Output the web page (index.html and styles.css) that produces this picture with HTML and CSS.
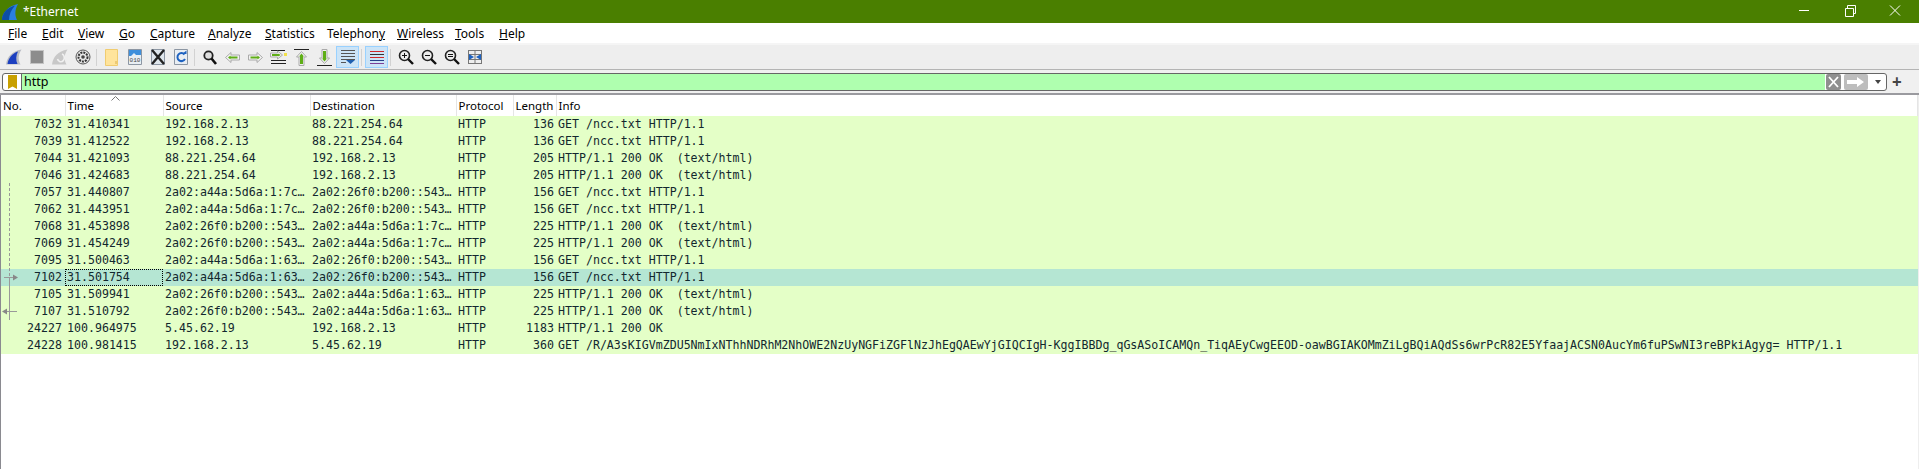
FILE: index.html
```html
<!DOCTYPE html>
<html lang="en">
<head>
  <meta charset="UTF-8">
  <title>*Ethernet</title>
  <link rel="stylesheet" href="styles.css">
</head>
<body>

<div class="titlebar">
  <svg class="app-icon" width="16" height="16" viewBox="0 0 16 16"><path d="M0 16C0 9 6 2 16 0C13 5 12.500 11 15 16Z" fill="#2a7fe0"/><path d="M0 16C0 9 5 4 13 1.500C9 6 7 11 7 16Z" fill="#0d4ea6"/></svg>
  <span class="title">*Ethernet</span>
  <div class="window-btns">
    <svg width="46" height="23" viewBox="0 0 46 23"><path d="M18 10.500H28" stroke="#fff"/></svg>
    <svg width="46" height="23" viewBox="0 0 46 23"><path d="M18.500 8.500H26.500V16.500H18.500ZM20.500 8.500V5.500H28.500V13.500H26.500" stroke="#fff" fill="none"/></svg>
    <svg width="46" height="23" viewBox="0 0 46 23"><path d="M17 5.500L27 15.500M27 5.500L17 15.500" stroke="#fff"/></svg>
  </div>
</div>

<div class="menubar">
  <span><u>F</u>ile</span>
  <span><u>E</u>dit</span>
  <span><u>V</u>iew</span>
  <span><u>G</u>o</span>
  <span><u>C</u>apture</span>
  <span><u>A</u>nalyze</span>
  <span><u>S</u>tatistics</span>
  <span>Telephon<u>y</u></span>
  <span><u>W</u>ireless</span>
  <span><u>T</u>ools</span>
  <span><u>H</u>elp</span>
</div>

<div class="toolbar">
  <div class="tool"><svg width="16" height="16" viewBox="0 0 16 16"><path d="M0 15.500C1 8 6 2 15.500 .500C12.500 5 11.500 10 14.500 15.500Z" fill="#b9bcc4"/><path d="M1.500 15C2.500 9 6 4.500 12 2.500C10 6.500 9.500 11 11.500 15Z" fill="#1c3fc0"/></svg></div>
  <div class="tool"><svg width="16" height="16" viewBox="0 0 16 16"><rect x="1.500" y="1.500" width="13" height="13" fill="#8c8c8c" stroke="#c4c4c4"/></svg></div>
  <div class="tool"><svg width="16" height="16" viewBox="0 0 16 16"><path d="M0 15.500C1 8 6 2 15.500 .500C12.500 5 11.500 10 14.500 15.500Z" fill="#c8c8c8"/><path d="M10 5A3.500 4 0 1 1 5.500 10" fill="none" stroke="#f0f0f0" stroke-width="1.600"/></svg></div>
  <div class="tool"><svg width="16" height="16" viewBox="0 0 16 16"><circle cx="8" cy="8" r="7" fill="#e8e8e8" stroke="#555"/><circle cx="8" cy="8" r="4.500" fill="none" stroke="#333" stroke-width="2" stroke-dasharray="2 1"/><circle cx="8" cy="8" r="1.800" fill="#444"/></svg></div>
  <div class="tool-sep"></div>
  <div class="tool"><svg width="14" height="17" viewBox="0 0 14 17"><path d="M.500.500H12.500V16.500H.500Z" fill="#ffe49c" stroke="#f0cc70"/><path d="M11 12V15" stroke="#d8b050"/></svg></div>
  <div class="tool"><svg width="14" height="16" viewBox="0 0 14 16"><path d="M.500.500H13.500V15.500H.500Z" fill="#e9eef3" stroke="#8c96a3"/><path d="M1 1H13V6H8L6 4L3 7H1Z" fill="#3f8fdc"/><text class="tiny" x="7" y="13" text-anchor="middle">010</text></svg></div>
  <div class="tool"><svg width="14" height="16" viewBox="0 0 14 16"><path d="M.500.500H13.500V15.500H.500Z" fill="#dfe6ec" stroke="#8c96a3"/><path d="M1 1L13 15M13 1L1 15" stroke="#222" stroke-width="2.400"/></svg></div>
  <div class="tool"><svg width="14" height="16" viewBox="0 0 14 16"><path d="M.500.500H13.500V15.500H.500Z" fill="#e9eef3" stroke="#8c96a3"/><path d="M10.500 5.500A4 4 0 1 0 11 10" fill="none" stroke="#1e62c0" stroke-width="2"/><path d="M8 5H12.500V1.500Z" fill="#1e62c0"/></svg></div>
  <div class="tool-sep"></div>
  <div class="tool"><svg width="14" height="15" viewBox="0 0 14 15"><circle cx="5.500" cy="5.500" r="4.200" fill="#ddd" stroke="#222" stroke-width="1.800"/><path d="M8.500 8.500L13 14" stroke="#111" stroke-width="2.600"/></svg></div>
  <div class="tool"><svg width="15" height="11" viewBox="0 0 15 11"><path d="M.500 5.500L6 .500V3H14.500V8H6V10.500Z" fill="#f2f2f2" stroke="#aaa"/><path d="M3 5.500L5.500 3.500V4.500H12.500V6.500H5.500V7.500Z" fill="#5fae17"/></svg></div>
  <div class="tool"><svg width="15" height="11" viewBox="0 0 15 11"><path d="M14.500 5.500L9 .500V3H.500V8H9V10.500Z" fill="#f2f2f2" stroke="#aaa"/><path d="M12 5.500L9.500 3.500V4.500H2.500V6.500H9.500V7.500Z" fill="#5fae17"/></svg></div>
  <div class="tool"><svg width="17" height="16" viewBox="0 0 17 16"><path d="M1 1.500H15M1 11.500H16M1 14.500H16" stroke="#222"/><path d="M12.500 6L7.500 2V4H.500V8H7.500V10Z" fill="#f2f2f2" stroke="#aaa"/><path d="M10.500 6L8.500 4.500V5H2V7H8.500V7.500Z" fill="#5fae17"/><rect x="14" y="4" width="3" height="3" fill="#f2e04a"/></svg></div>
  <div class="tool"><svg width="15" height="17" viewBox="0 0 15 17"><path d="M0 .500H15" stroke="#222"/><path d="M7.500 2.500L12.500 8H10V16.500H5V8H2.500Z" fill="#f2f2f2" stroke="#aaa"/><path d="M7.500 4.500L10 7.500H9V15H6V7.500H5Z" fill="#5fae17"/></svg></div>
  <div class="tool"><svg width="15" height="17" viewBox="0 0 15 17"><path d="M0 16.500H15" stroke="#222"/><path d="M7.500 14.500L12.500 9H10V.500H5V9H2.500Z" fill="#f2f2f2" stroke="#aaa"/><path d="M7.500 12.500L10 9.500H9V2H6V9.500H5Z" fill="#5fae17"/></svg></div>
  <div class="tool on"><svg width="16" height="16" viewBox="0 0 16 16"><path d="M1 1.500H15M1 4.500H15M1 7.500H15M1 10.500H15M1 13.500H6" stroke="#555"/><path d="M6 11H15L10.500 15Z" fill="#1e5fb0"/></svg></div>
  <div class="tool-sep"></div>
  <div class="tool on"><svg width="16" height="16" viewBox="0 0 16 16"><path d="M1 2.500H15" stroke="#d0282c"/><path d="M1 5.500H15" stroke="#333"/><path d="M1 8.500H15" stroke="#d0282c"/><path d="M1 11.500H15" stroke="#27408b"/><path d="M1 14.500H15" stroke="#7b3f98"/></svg></div>
  <div class="tool-sep"></div>
  <div class="tool"><svg width="16" height="16" viewBox="0 0 16 16"><circle cx="6.500" cy="6.500" r="5" fill="#eee" stroke="#222" stroke-width="1.600"/><path d="M4 6.500H9M6.500 4V9" stroke="#111"/><path d="M10 10L15 15" stroke="#111" stroke-width="2.400"/></svg></div>
  <div class="tool"><svg width="16" height="16" viewBox="0 0 16 16"><circle cx="6.500" cy="6.500" r="5" fill="#eee" stroke="#222" stroke-width="1.600"/><path d="M4 6.500H9" stroke="#111"/><path d="M10 10L15 15" stroke="#111" stroke-width="2.400"/></svg></div>
  <div class="tool"><svg width="16" height="16" viewBox="0 0 16 16"><circle cx="6.500" cy="6.500" r="5" fill="#eee" stroke="#222" stroke-width="1.600"/><path d="M4 5.500H9M4 7.500H9" stroke="#111"/><path d="M10 10L15 15" stroke="#111" stroke-width="2.400"/></svg></div>
  <div class="tool"><svg width="16" height="16" viewBox="0 0 16 16"><path d="M1 1.500H15M1 14.500H15M1.500 1V15M8 1V15M14.500 1V15M1 5.500H15M1 10.500H15" stroke="#777"/><path d="M2 5V11L7 8ZM14 5V11L9 8Z" fill="#1e62c0"/></svg></div>
</div>

<div class="filterbar">
  <div class="filter-box">
    <div class="bookmark"><svg width="9" height="14" viewBox="0 0 9 14"><path d="M0 0H9V14L4.500 11.500L0 14Z" fill="#c8a000"/></svg></div>
    <div class="filter-text">http</div>
    <div class="filter-clear"><svg width="15" height="14" viewBox="0 0 15 14"><path d="M3 2L12 12M12 2L3 12" stroke="#fff" stroke-width="1.800"/></svg></div>
    <div class="filter-apply"><svg width="18" height="10" viewBox="0 0 18 10"><path d="M0 3H10V0L17 5L10 10V7H0Z" fill="#fff"/></svg></div>
    <div class="filter-drop"></div>
  </div>
  <div class="filter-add">+</div>
</div>

<div class="packet-list">
  <table>
    <colgroup>
      <col class="c-no"><col class="c-time"><col class="c-src"><col class="c-dst"><col class="c-proto"><col class="c-len"><col>
    </colgroup>
    <thead>
      <tr><th>No.</th><th>Time</th><th>Source</th><th>Destination</th><th>Protocol</th><th>Length</th><th>Info</th></tr>
    </thead>
    <tbody>
      <tr><td>7032</td><td>31.410341</td><td>192.168.2.13</td><td>88.221.254.64</td><td>HTTP</td><td>136</td><td>GET /ncc.txt HTTP/1.1</td></tr>
      <tr><td>7039</td><td>31.412522</td><td>192.168.2.13</td><td>88.221.254.64</td><td>HTTP</td><td>136</td><td>GET /ncc.txt HTTP/1.1</td></tr>
      <tr><td>7044</td><td>31.421093</td><td>88.221.254.64</td><td>192.168.2.13</td><td>HTTP</td><td>205</td><td>HTTP/1.1 200 OK  (text/html)</td></tr>
      <tr><td>7046</td><td>31.424683</td><td>88.221.254.64</td><td>192.168.2.13</td><td>HTTP</td><td>205</td><td>HTTP/1.1 200 OK  (text/html)</td></tr>
      <tr><td>7057</td><td>31.440807</td><td>2a02:a44a:5d6a:1:7c…</td><td>2a02:26f0:b200::543…</td><td>HTTP</td><td>156</td><td>GET /ncc.txt HTTP/1.1</td></tr>
      <tr><td>7062</td><td>31.443951</td><td>2a02:a44a:5d6a:1:7c…</td><td>2a02:26f0:b200::543…</td><td>HTTP</td><td>156</td><td>GET /ncc.txt HTTP/1.1</td></tr>
      <tr><td>7068</td><td>31.453898</td><td>2a02:26f0:b200::543…</td><td>2a02:a44a:5d6a:1:7c…</td><td>HTTP</td><td>225</td><td>HTTP/1.1 200 OK  (text/html)</td></tr>
      <tr><td>7069</td><td>31.454249</td><td>2a02:26f0:b200::543…</td><td>2a02:a44a:5d6a:1:7c…</td><td>HTTP</td><td>225</td><td>HTTP/1.1 200 OK  (text/html)</td></tr>
      <tr><td>7095</td><td>31.500463</td><td>2a02:a44a:5d6a:1:63…</td><td>2a02:26f0:b200::543…</td><td>HTTP</td><td>156</td><td>GET /ncc.txt HTTP/1.1</td></tr>
      <tr class="selected"><td>7102</td><td class="focus">31.501754</td><td>2a02:a44a:5d6a:1:63…</td><td>2a02:26f0:b200::543…</td><td>HTTP</td><td>156</td><td>GET /ncc.txt HTTP/1.1</td></tr>
      <tr><td>7105</td><td>31.509941</td><td>2a02:26f0:b200::543…</td><td>2a02:a44a:5d6a:1:63…</td><td>HTTP</td><td>225</td><td>HTTP/1.1 200 OK  (text/html)</td></tr>
      <tr><td>7107</td><td>31.510792</td><td>2a02:26f0:b200::543…</td><td>2a02:a44a:5d6a:1:63…</td><td>HTTP</td><td>225</td><td>HTTP/1.1 200 OK  (text/html)</td></tr>
      <tr><td>24227</td><td>100.964975</td><td>5.45.62.19</td><td>192.168.2.13</td><td>HTTP</td><td>1183</td><td>HTTP/1.1 200 OK</td></tr>
      <tr><td>24228</td><td>100.981415</td><td>192.168.2.13</td><td>5.45.62.19</td><td>HTTP</td><td>360</td><td>GET /R/A3sKIGVmZDU5NmIxNThhNDRhM2NhOWE2NzUyNGFiZGFlNzJhEgQAEwYjGIQCIgH-KggIBBDg_qGsASoICAMQn_TiqAEyCwgEEOD-oawBGIAKOMmZiLgBQiAQdSs6wrPcR82E5YfaajACSN0AucYm6fuPSwNI3reBPkiAgyg= HTTP/1.1</td></tr>
    </tbody>
  </table>

  <svg class="sort-arrow" width="9" height="5" viewBox="0 0 9 5"><path d="M.500 4.500L4.500 .500L8.500 4.500" fill="none" stroke="#777"/></svg>

  <!-- conversation markers in the No. column -->
  <svg class="conv-marks" width="20" height="140" viewBox="0 0 20 140">
    <path d="M8.500 0V94" stroke="#999" stroke-dasharray="3 2"/>
    <path d="M8.500 94V137" stroke="#999"/>
    <path d="M3 94.500H16" stroke="#999"/>
    <path d="M12 91.500L17 94.500L12 97.500Z" fill="#888"/>
    <path d="M2 128.500H16" stroke="#999"/>
    <path d="M6 125.500L1 128.500L6 131.500Z" fill="#888"/>
  </svg>
</div>

</body>
</html>
```

FILE: styles.css
```css
html, body {
  margin: 0;
  padding: 0;
  height: 469px;
  overflow: hidden;
  background-color: #fff;
  font-family: "Noto Sans", sans-serif;
  font-size: 12px;
  color: #000;
}

.titlebar {
  height: 23px;
  background-color: #4a7f00;
  color: #fff;
  display: flex;
  align-items: center;
  padding-left: 2px;
}
.app-icon {
  margin-right: 5px;
}
.title {
  font-size: 12px;
}
.window-btns {
  margin-left: auto;
  display: flex;
}

.menubar {
  height: 20px;
  display: grid;
  grid-template-columns: 34px 36px 41px 31px 58px 57px 62px 70px 58px 44px auto;
  justify-content: start;
  align-items: center;
  background-color: #fff;
  padding-left: 8px;
  border-bottom: 2px solid #f5f5f5;
}
.menubar span {
  white-space: nowrap;
}

.toolbar {
  height: 24px;
  display: flex;
  align-items: center;
  background-color: #eee;
  padding-left: 2px;
  border-bottom: 1px solid #b4b4b4;
}
.tool {
  width: 23px;
  height: 22px;
  box-sizing: border-box;
  display: flex;
  align-items: center;
  justify-content: center;
}
.tool.on {
  background-color: #cce4f7;
  border: 1px solid #99d1ff;
}
.tool-sep {
  width: 1px;
  height: 17px;
  background-color: #d2d2d2;
  margin: 0 3px 0 2px;
}
.tiny {
  font-family: "Liberation Mono", monospace;
  font-size: 6px;
  fill: #444;
}

.filterbar {
  height: 23px;
  display: flex;
  align-items: center;
  background-color: #f0f0f0;
  padding-left: 2px;
  border-bottom: 2px solid #9a9a9f;
}
.filter-box {
  width: 1885px;
  height: 18px;
  box-sizing: border-box;
  border: 1px solid #666;
  border-radius: 3px;
  background-color: #fff;
  display: flex;
  align-items: stretch;
}
.bookmark {
  width: 18px;
  border-right: 1px solid #666;
  display: flex;
  align-items: center;
  justify-content: center;
}
.filter-text {
  flex: 1;
  background-color: #afffaf;
  padding-left: 2px;
  line-height: 15px;
  font-size: 12.500px;
}
.filter-clear {
  width: 15px;
  margin-left: 1px;
  background-color: #8f8f8f;
  border-radius: 2px;
  display: flex;
  align-items: center;
  justify-content: center;
}
.filter-apply {
  width: 24px;
  margin-left: 3px;
  background-color: #bdbdbd;
  border-radius: 2px;
  display: flex;
  align-items: center;
  justify-content: center;
}
.filter-drop {
  width: 18px;
  position: relative;
}
.filter-drop::after {
  content: "";
  position: absolute;
  left: 7px;
  top: 6px;
  border-left: 3px solid transparent;
  border-right: 3px solid transparent;
  border-top: 4px solid #444;
}
.filter-add {
  margin-left: 5px;
  font-size: 17px;
  font-weight: bold;
  line-height: 18px;
  color: #444;
}

.packet-list {
  position: relative;
  height: 374px;
  border-left: 1px solid #8a8a90;
  border-right: 1px solid #eee;
}
table {
  width: 1917px;
  table-layout: fixed;
  border-collapse: collapse;
}
.c-no { width: 64px; }
.c-time { width: 98px; }
.c-src { width: 147px; }
.c-dst { width: 146px; }
.c-proto { width: 57px; }
.c-len { width: 43px; }

th {
  height: 21px;
  padding: 0 0 0 2px;
  text-align: left;
  font-weight: normal;
  font-size: 11.500px;
  border-right: 1px solid #e5e5e5;
  background-color: #fff;
}
td {
  height: 17px;
  padding: 0 3px 0 2px;
  font-family: "DejaVu Sans Mono", "Liberation Mono", monospace;
  font-size: 11.600px;
  line-height: 17px;
  white-space: pre;
  overflow: hidden;
  color: #12272e;
}
tbody tr {
  background-color: #e4ffc7;
}
tbody tr.selected {
  background-color: #b5e6d3;
}
td:first-child, td:nth-child(6) {
  text-align: right;
}
td:nth-child(6) {
  padding-right: 2px;
}
td.focus {
  outline: 1px dotted #000;
  outline-offset: -1px;
}
td:last-child {
  overflow: visible;
}

.sort-arrow {
  position: absolute;
  left: 110px;
  top: 1px;
}
.conv-marks {
  position: absolute;
  left: 0;
  top: 88px;
}
```
